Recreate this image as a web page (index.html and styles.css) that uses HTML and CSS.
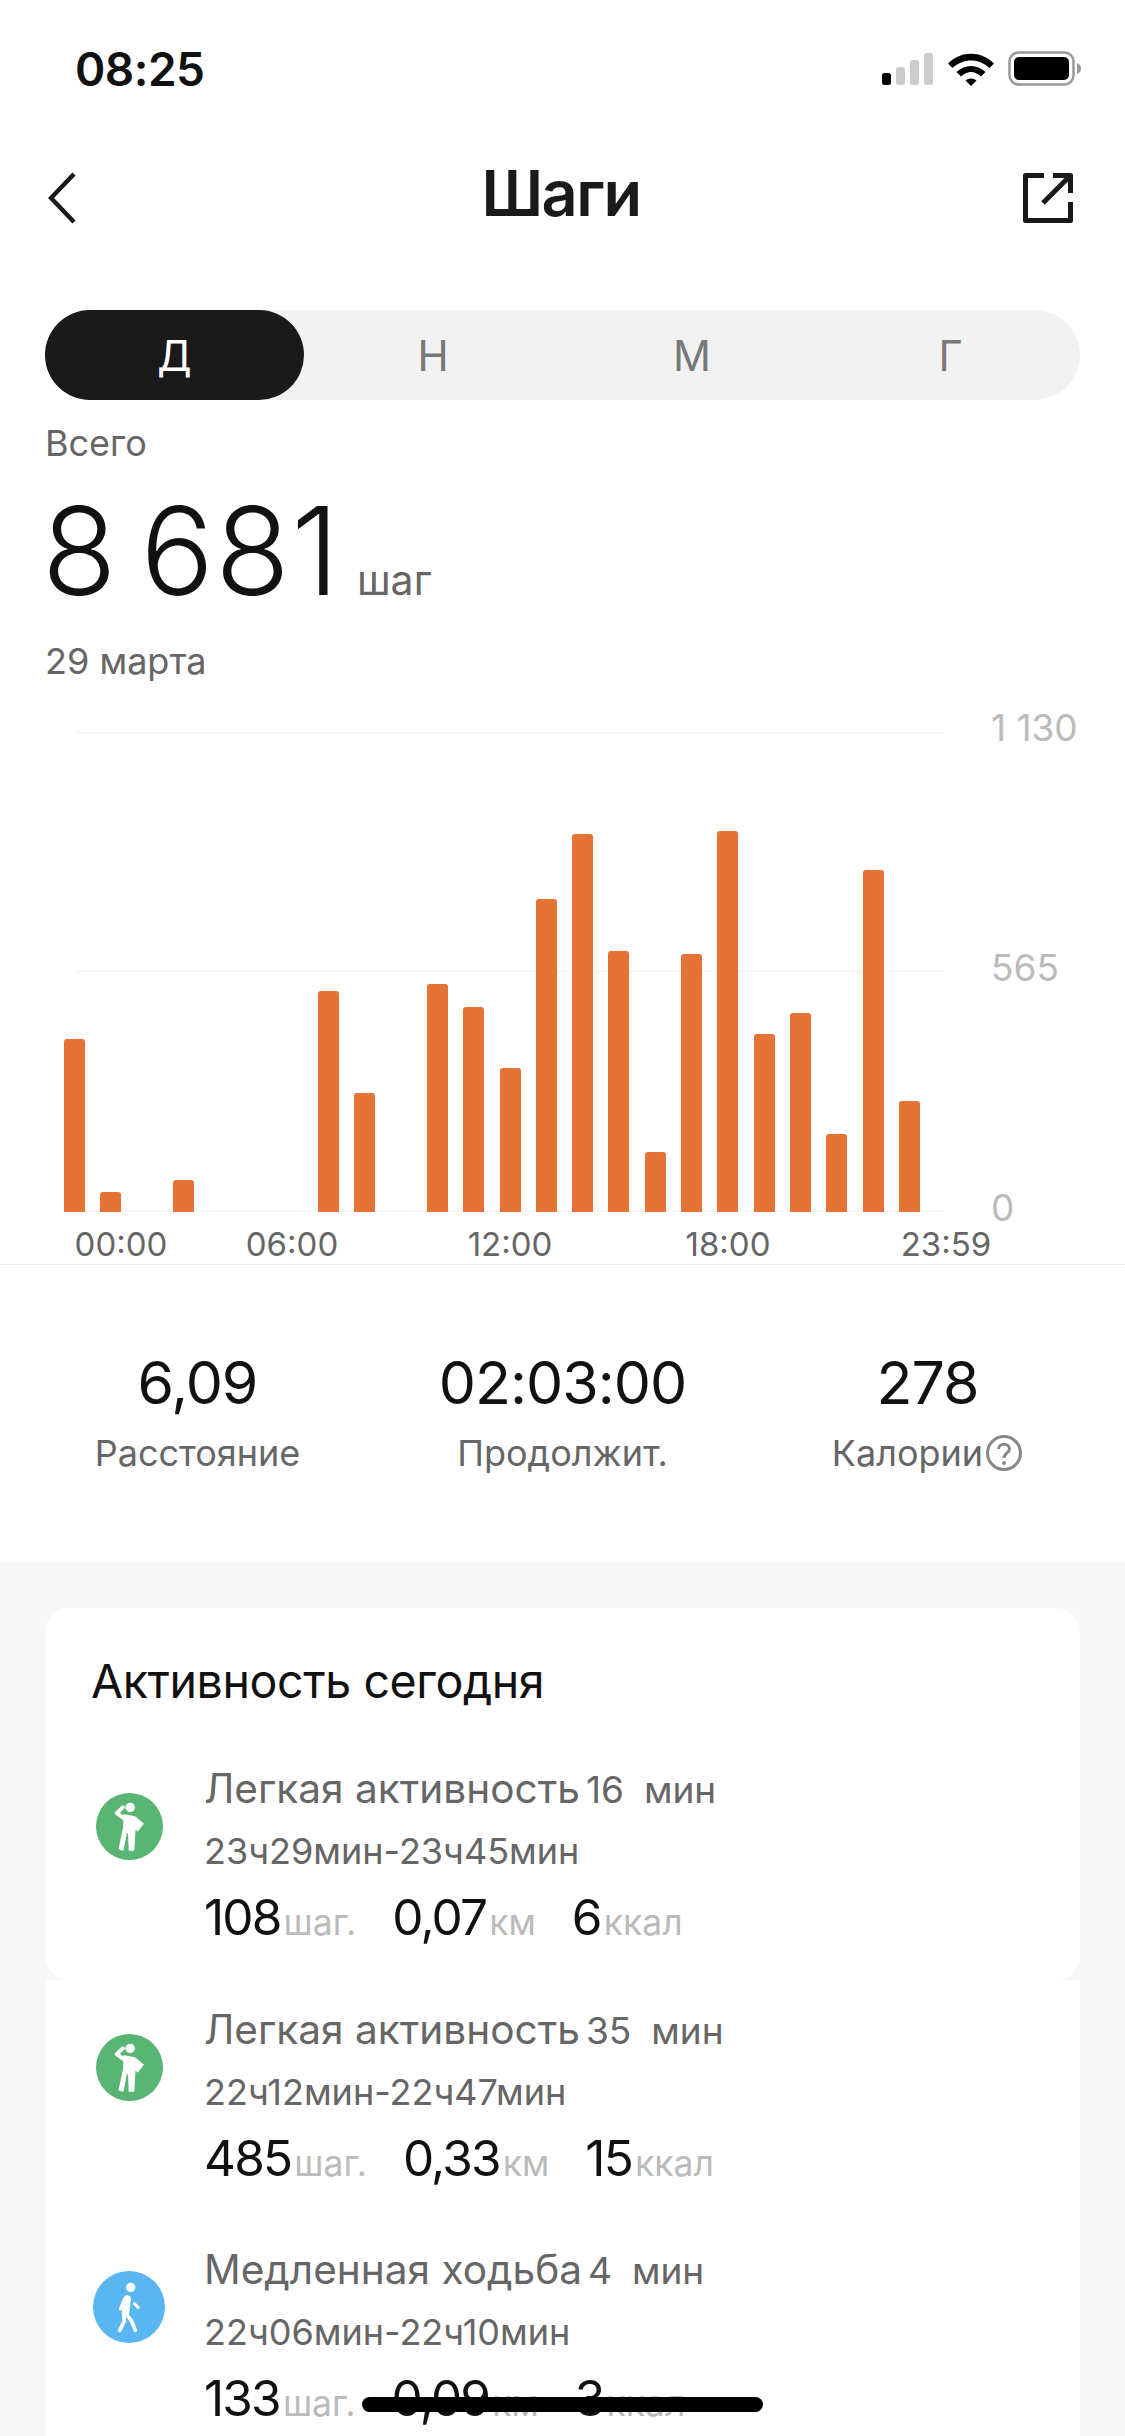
FILE: index.html
```html
<!DOCTYPE html>
<html>
<head>
	<meta charset="utf-8">
	<title>Шаги</title>
	<link rel="stylesheet" href="styles.css">
</head>
<body>
<div class="page">
	<div class="status">
		<span class="time">08:25</span>
		<div class="status-icons">
			<svg width="52" height="34" viewBox="0 0 52 34">
				<rect x="0" y="21" width="9" height="12" rx="2.5" fill="#000"/>
				<rect x="14" y="15" width="9" height="18" rx="2.5" fill="#ccc"/>
				<rect x="28" y="8" width="9" height="25" rx="2.5" fill="#ccc"/>
				<rect x="42" y="1" width="9" height="32" rx="2.5" fill="#ccc"/>
			</svg>
			<svg width="46" height="34" viewBox="0 0 46 34">
				<path d="M0 11.5C13 -1.5 33 -1.5 46 11.5L41.5 16C31 6 15 6 4.5 16Z" fill="#000"/>
				<path d="M8.5 20C17 12 29 12 37.5 20L33 24.5C26.500 18.500 19.500 18.500 13 24.500Z" fill="#000"/>
				<path d="M17.500 28.500C20.500 25.800 25.500 25.800 28.500 28.500L23 34Z" fill="#000"/>
			</svg>
			<svg width="74" height="36" viewBox="0 0 74 36">
				<rect x="1.500" y="1.500" width="64" height="32" rx="9" fill="none" stroke="#999" stroke-width="2.500"/>
				<rect x="6" y="6" width="55" height="23" rx="5" fill="#000"/>
				<path d="M69 12C72 13 73 15 73 17.500C73 20 72 22 69 23Z" fill="#999"/>
			</svg>
		</div>
	</div>

	<div class="nav">
		<svg class="back" width="28" height="52" viewBox="0 0 28 52">
			<path d="M26 2L3 26L26 50" fill="none" stroke="#1a1a1a" stroke-width="4.500"/>
		</svg>
		<h1>Шаги</h1>
		<svg class="share" width="52" height="52" viewBox="0 0 52 52">
			<path d="M22 3.500H3.500V48.500H48.500V30" fill="none" stroke="#1a1a1a" stroke-width="5" stroke-linejoin="round"/>
			<path d="M31 3.500H48.500V21" fill="none" stroke="#1a1a1a" stroke-width="5" stroke-linejoin="round"/>
			<path d="M47 5L21 31" fill="none" stroke="#1a1a1a" stroke-width="5"/>
		</svg>
	</div>

	<div class="tabs">
		<div class="tab active">Д</div>
		<div class="tab">Н</div>
		<div class="tab">М</div>
		<div class="tab">Г</div>
	</div>

	<div class="summary">
		<div class="muted">Всего</div>
		<div class="total"><span class="total-num">8 681</span><span class="total-unit">шаг</span></div>
		<div class="muted date">29 марта</div>
	</div>

	<div class="chart">
		<div class="plot">
			<div class="grid-line top"></div>
			<div class="grid-line mid"></div>
			<div class="grid-line base"></div>
			<div class="bars">
				<div class="bar" style="height:173px"></div>
				<div class="bar" style="height:20px"></div>
				<div class="bar" style="height:0"></div>
				<div class="bar" style="height:32px"></div>
				<div class="bar" style="height:0"></div>
				<div class="bar" style="height:0"></div>
				<div class="bar" style="height:0"></div>
				<div class="bar" style="height:221px"></div>
				<div class="bar" style="height:119px"></div>
				<div class="bar" style="height:0"></div>
				<div class="bar" style="height:228px"></div>
				<div class="bar" style="height:205px"></div>
				<div class="bar" style="height:144px"></div>
				<div class="bar" style="height:313px"></div>
				<div class="bar" style="height:378px"></div>
				<div class="bar" style="height:261px"></div>
				<div class="bar" style="height:60px"></div>
				<div class="bar" style="height:258px"></div>
				<div class="bar" style="height:381px"></div>
				<div class="bar" style="height:178px"></div>
				<div class="bar" style="height:199px"></div>
				<div class="bar" style="height:78px"></div>
				<div class="bar" style="height:342px"></div>
				<div class="bar" style="height:111px"></div>
			</div>
		</div>
		<div class="y-labels">
			<span>1 130</span>
			<span>565</span>
			<span>0</span>
		</div>
	</div>
	<div class="x-labels">
		<span>00:00</span>
		<span>06:00</span>
		<span>12:00</span>
		<span>18:00</span>
		<span>23:59</span>
	</div>

	<div class="stats">
		<div class="stat">
			<div class="stat-val">6,09</div>
			<div class="stat-label">Расстояние</div>
		</div>
		<div class="stat">
			<div class="stat-val">02:03:00</div>
			<div class="stat-label">Продолжит.</div>
		</div>
		<div class="stat">
			<div class="stat-val">278</div>
			<div class="stat-label">Калории<svg class="help" width="38" height="38" viewBox="0 0 38 38">
				<circle cx="19" cy="19" r="16.500" fill="none" stroke="#888" stroke-width="3"/>
				<path d="M13.500 15C13.500 8.500 24.500 8.500 24.500 15C24.500 19 19 19 19 24" fill="none" stroke="#888" stroke-width="3"/>
				<circle cx="19" cy="29" r="2" fill="#888"/>
			</svg></div>
		</div>
	</div>

	<div class="lower">
		<div class="card first">
			<h2>Активность сегодня</h2>
			<div class="row">
				<svg class="ico" width="67" height="67" viewBox="0 0 200 200">
					<circle cx="100" cy="100" r="100" fill="#58b573"/>
					<circle cx="102" cy="43" r="14" fill="#fff"/>
					<path d="M84 76L62 60L80 43" fill="none" stroke="#fff" stroke-width="12" stroke-linecap="round" stroke-linejoin="round"/>
					<path d="M84 66L116 72L140 92L124 112L116 100L112 170L100 170L98 118L90 118L80 170L70 166L84 100Z" fill="#fff" stroke="#fff" stroke-width="5" stroke-linejoin="round"/>
				</svg>
				<div class="row-body">
					<div class="row-title">Легкая активность<span class="mins">16</span><span class="mins-unit">мин</span></div>
					<div class="row-time">23ч29мин-23ч45мин</div>
					<div class="row-vals">
						<span class="val">108<small>шаг.</small></span>
						<span class="val">0,07<small>км</small></span>
						<span class="val">6<small>ккал</small></span>
					</div>
				</div>
			</div>
		</div>
		<div class="card second">
			<div class="row">
				<svg class="ico" width="67" height="67" viewBox="0 0 200 200">
					<circle cx="100" cy="100" r="100" fill="#58b573"/>
					<circle cx="102" cy="43" r="14" fill="#fff"/>
					<path d="M84 76L62 60L80 43" fill="none" stroke="#fff" stroke-width="12" stroke-linecap="round" stroke-linejoin="round"/>
					<path d="M84 66L116 72L140 92L124 112L116 100L112 170L100 170L98 118L90 118L80 170L70 166L84 100Z" fill="#fff" stroke="#fff" stroke-width="5" stroke-linejoin="round"/>
				</svg>
				<div class="row-body">
					<div class="row-title">Легкая активность<span class="mins">35</span><span class="mins-unit">мин</span></div>
					<div class="row-time">22ч12мин-22ч47мин</div>
					<div class="row-vals">
						<span class="val">485<small>шаг.</small></span>
						<span class="val">0,33<small>км</small></span>
						<span class="val">15<small>ккал</small></span>
					</div>
				</div>
			</div>
			<div class="row">
				<svg class="ico walk" width="72" height="72" viewBox="0 0 216 216">
					<circle cx="108" cy="108" r="108" fill="#59b6f0"/>
					<circle cx="113" cy="49" r="14" fill="#fff"/>
					<path d="M103 84L97 128" fill="none" stroke="#fff" stroke-width="22" stroke-linecap="round"/>
					<path d="M94 84L82 114" fill="none" stroke="#fff" stroke-width="9" stroke-linecap="round"/>
					<path d="M124 98L136 110" fill="none" stroke="#fff" stroke-width="9" stroke-linecap="round"/>
					<path d="M100 130L116 150L127 178" fill="none" stroke="#fff" stroke-width="11" stroke-linecap="round" stroke-linejoin="round"/>
					<path d="M92 136L94 150L80 178" fill="none" stroke="#fff" stroke-width="11" stroke-linecap="round" stroke-linejoin="round"/>
				</svg>
				<div class="row-body">
					<div class="row-title">Медленная ходьба<span class="mins">4</span><span class="mins-unit">мин</span></div>
					<div class="row-time">22ч06мин-22ч10мин</div>
					<div class="row-vals">
						<span class="val">133<small>шаг.</small></span>
						<span class="val">0,09<small>км</small></span>
						<span class="val">3<small>ккал</small></span>
					</div>
				</div>
			</div>
		</div>
	</div>

	<div class="home-bar"></div>
</div>
</body>
</html>
```

FILE: styles.css
```css
* {
	margin: 0;
	padding: 0;
	box-sizing: border-box;
}
html, body {
	background: #fff;
}
body {
	font-family: Inter, "Noto Sans", sans-serif;
	color: #1a1a1a;
}
.page {
	width: 1125px;
	height: 2436px;
	overflow: hidden;
	position: relative;
	background: #fff;
}

/* status bar */
.status {
	height: 138px;
	padding: 0 43px 0 75px;
	display: flex;
	align-items: center;
	justify-content: space-between;
}
.time {
	font-size: 46px;
	font-weight: 600;
	color: #111;
	letter-spacing: -0.5px;
}
.status-icons {
	display: flex;
	align-items: center;
	gap: 14px;
}

/* title */
.nav {
	height: 114px;
	padding: 0 51px 0 48px;
	display: grid;
	grid-template-columns: 1fr auto 1fr;
	align-items: center;
}
.nav h1 {
	font-size: 63px;
	line-height: 70px;
	font-weight: 600;
	letter-spacing: -1.5px;
	margin-bottom: 4px;
}
.back, .share {
	margin-top: 6px;
}
.share {
	justify-self: end;
}

/* day / week / month / year */
.tabs {
	margin: 58px 45px 0;
	height: 90px;
	background: #f2f2f2;
	border-radius: 45px;
	display: grid;
	grid-template-columns: repeat(4, 1fr);
}
.tab {
	display: flex;
	align-items: center;
	justify-content: center;
	font-size: 42px;
	color: #777;
	border-radius: 45px;
}
.tab.active {
	background: #1a1a1a;
	color: #fff;
}

.summary {
	padding: 21px 45px 0;
}
.muted {
	font-size: 36px;
	line-height: 44px;
	color: #666;
}
.total {
	margin-top: 21px;
	height: 130px;
	display: flex;
	align-items: baseline;
}
.total-num {
	font-size: 122px;
	line-height: 130px;
	font-weight: 300;
	letter-spacing: 1.5px;
	word-spacing: -13.500px;
	margin-left: -3px;
	color: #111;
}
.total-unit {
	font-size: 41px;
	color: #666;
	margin-left: 16px;
}
.date {
	margin-top: 23px;
}

/* chart */
.chart {
	margin-top: 49px;
	padding-left: 64px;
	display: flex;
}
.plot {
	width: 881px;
	height: 480px;
	position: relative;
}
.grid-line {
	position: absolute;
	left: 11px;
	right: 0;
	height: 1px;
	background: #f2f2f2;
}
.grid-line.top {
	top: 0;
}
.grid-line.mid {
	top: 239px;
}
.grid-line.base {
	bottom: 0;
}
.bars {
	position: relative;
	height: 100%;
	display: grid;
	grid-template-columns: repeat(24, 21px);
	column-gap: 15.3px;
	align-items: end;
}
.bar {
	background: #e57336;
	border-radius: 3px 3px 0 0;
}
.y-labels {
	margin: -24px 0 -16px 46px;
	display: flex;
	flex-direction: column;
	justify-content: space-between;
	font-size: 37px;
	line-height: 40px;
	color: #bbb;
	white-space: nowrap;
}
.x-labels {
	margin-top: 12px;
	height: 41px;
	padding-left: 71px;
	display: flex;
	font-size: 33px;
	line-height: 40px;
	color: #666;
	border-bottom: 1px solid #eee;
}
.x-labels span {
	width: 100px;
	text-align: center;
	margin-right: 118px;
}
.x-labels span:first-child {
	margin-right: 71px;
}

/* distance, time, calories */
.stats {
	height: 298px;
	padding: 83px 15px 0;
	display: grid;
	grid-template-columns: repeat(3, 1fr);
	text-align: center;
}
.stat-val {
	font-size: 59px;
	line-height: 70px;
	letter-spacing: -1px;
	color: #111;
}
.stat-label {
	margin-top: 10px;
	font-size: 36px;
	line-height: 50px;
	color: #666;
	display: flex;
	justify-content: center;
	align-items: center;
}
.help {
	margin-left: 2px;
}

/* activity list */
.lower {
	height: 873px;
	padding: 45px 45px 0;
	background: #f7f7f7;
}
.card {
	background: #fff;
	padding: 0 46px;
}
.card.first {
	height: 372px;
	border-radius: 24px;
}
.card.second {
	height: 520px;
	padding-top: 20px;
	display: flex;
	flex-direction: column;
	gap: 50px;
}
.card h2 {
	font-size: 46.500px;
	font-weight: 400;
	line-height: 60px;
	padding-top: 43px;
	height: 151px;
	color: #111;
	letter-spacing: -0.4px;
}
.row {
	display: flex;
	align-items: flex-start;
	height: 190px;
}
.ico {
	flex: none;
	margin: 34px 41px 0 5px;
}
.ico.walk {
	margin: 31px 39px 0 2px;
}
.row-title {
	font-size: 40.600px;
	line-height: 60px;
	color: #666;
	white-space: nowrap;
	display: flex;
	align-items: baseline;
}
.mins {
	font-size: 37px;
	margin-left: 6px;
}
.mins-unit {
	font-size: 37px;
	margin-left: 20px;
}
.row-time {
	font-size: 36px;
	line-height: 63px;
	color: #666;
}
.row-vals {
	display: flex;
	gap: 36px;
	margin-top: 1px;
	line-height: 66px;
}
.val {
	font-size: 49.500px;
	color: #111;
	letter-spacing: -1.8px;
}
.val small {
	font-size: 35.500px;
	color: #bbb;
	letter-spacing: 0;
	margin-left: 3px;
}

.home-bar {
	position: absolute;
	left: 362px;
	top: 2397px;
	width: 401px;
	height: 15px;
	border-radius: 8px;
	background: #000;
}
```
